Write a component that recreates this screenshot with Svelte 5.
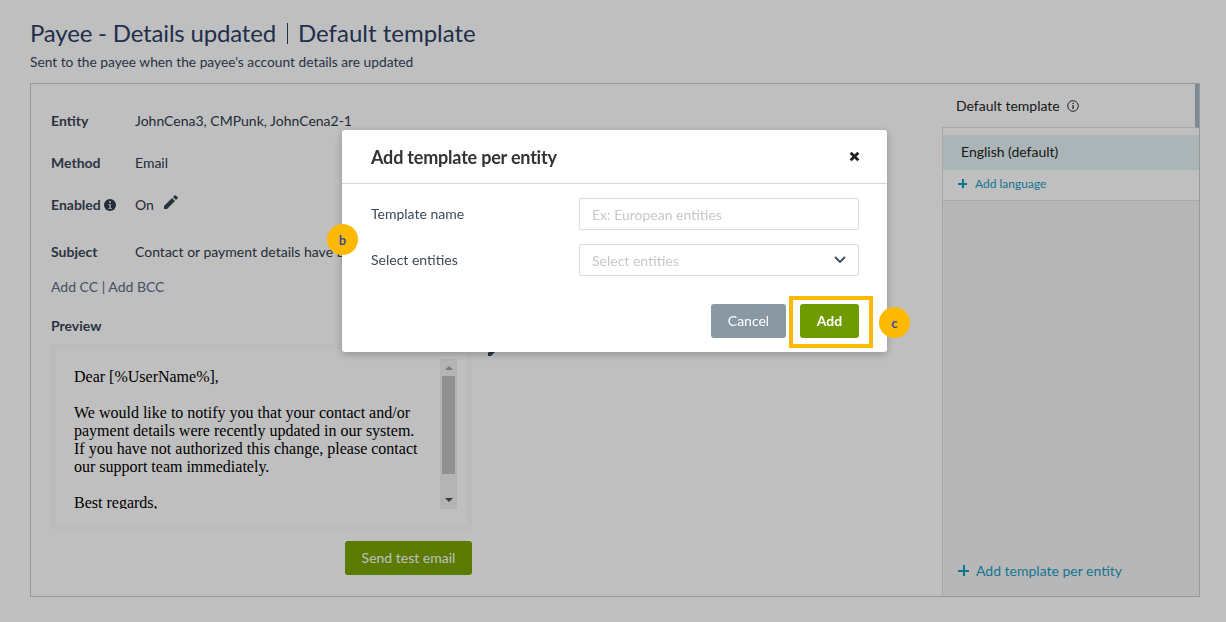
<script>
  let templateName = $state('');
</script>

<div class="page">
  <h1><span class="tight">Payee - Details updated</span><span class="sep"></span>Default template</h1>
  <p class="sub">Sent to the payee when the payee's account details are updated</p>

  <div class="card">
    <div class="left">
      <div class="row entity"><span class="label">Entity</span><span>JohnCena3, CMPunk, JohnCena2-1</span></div>
      <div class="row method"><span class="label">Method</span><span>Email</span></div>
      <div class="row enabled">
        <span class="label">Enabled
          <svg class="info" viewBox="0 0 12 12" width="12" height="12">
            <circle cx="6" cy="6" r="6" fill="#2f3b4d" />
            <rect x="5" y="2" width="2" height="2" fill="#bfbfbf" />
            <path d="M4.2 5h2.8v4h1v1H4.2V9h1V6h-1z" fill="#bfbfbf" />
          </svg>
        </span>
        <span>On</span>
        <svg class="pencil" viewBox="0 0 14 14" width="14" height="14">
          <path d="M0 14v-3l8-8 3 3-8 8zM9 2l1.500-1.500a1 1 0 0 1 1.400 0l1.600 1.600a1 1 0 0 1 0 1.400L12 5z" fill="#35474f" />
        </svg>
      </div>
      <div class="row subject"><span class="label">Subject</span><span>Contact or payment details have been updated</span></div>
      <div class="cc"><span>Add CC</span> | <span>Add BCC</span></div>
      <div class="label preview-label">Preview</div>
      <div class="preview">
        <div class="mail">
          <p>Dear [%UserName%],</p>
          <p>We would like to notify you that your contact and/or payment details were recently updated in our system. If you have not authorized this change, please contact our support team immediately.</p>
          <p>Best regards,</p>
        </div>
        <div class="scrollbar">
          <span class="arrow up"></span>
          <span class="thumb"></span>
          <span class="arrow down"></span>
        </div>
      </div>
      <div class="actions"><button class="send">Send test email</button></div>
    </div>

    <div class="gutter">
      <svg class="pencil2" viewBox="0 0 14 14" width="14" height="14">
        <path d="M0 14v-3l8-8 3 3-8 8z" fill="#35474f" />
      </svg>
    </div>

    <aside class="side">
      <div class="tab">
        <span>Default template</span>
        <svg viewBox="0 0 12 12" width="12" height="12">
          <circle cx="6" cy="6" r="5.300" fill="none" stroke="#333" stroke-width="1" />
          <rect x="5.400" y="2.800" width="1.300" height="1.300" fill="#333" />
          <rect x="5.400" y="5" width="1.300" height="4" fill="#333" />
        </svg>
      </div>
      <div class="langs">
        <div class="lang">English (default)</div>
        <div class="add-lang"><span class="plus small"></span>Add language</div>
      </div>
      <div class="rest">
        <div class="add-tpl"><span class="plus"></span>Add template per entity</div>
      </div>
    </aside>
  </div>
</div>

<div class="overlay"></div>

<div class="modal">
  <header>
    <h2>Add template per entity</h2>
    <svg class="close" viewBox="0 0 10 10" width="11" height="11">
      <path d="M1.500 1.500l7 7M8.500 1.500l-7 7" stroke="#222" stroke-width="2.600" />
    </svg>
  </header>
  <div class="form">
    <label for="tpl">Template name</label>
    <input id="tpl" placeholder="Ex: European entities" bind:value={templateName} />
    <span class="flabel">Select entities</span>
    <div class="select">
      <span>Select entities</span>
      <svg viewBox="0 0 12 8" width="12" height="8">
        <path d="M1 1l5 5 5-5" fill="none" stroke="#3c4a57" stroke-width="1.800" />
      </svg>
    </div>
  </div>
  <footer>
    <button class="cancel">Cancel</button>
    <button class="add">Add</button>
  </footer>
  <span class="highlight"></span>
  <span class="badge b">b</span>
  <span class="badge c">c</span>
</div>

<style>
  :global(body) {
    margin: 0;
    background: #fff;
    font-family: Lato, "Open Sans", sans-serif;
    color: #2f3b4d;
  }

  .page {
    height: 622px;
    box-sizing: border-box;
    padding: 18px 26px 25px 30px;
    overflow: hidden;
  }

  h1 {
    margin: 0;
    font-size: 24px;
    font-weight: 400;
    line-height: 29px;
    color: #2c3e66;
  }

  .tight {
    letter-spacing: -0.18px;
  }

  .sep {
    display: inline-block;
    width: 1px;
    height: 21px;
    background: #2c3e66;
    margin: 0 10px 0 11px;
    vertical-align: -2px;
  }

  .sub {
    margin: 7px 0 0;
    font-size: 13.750px;
    line-height: 16px;
    color: #36465c;
  }

  .card {
    display: flex;
    height: 514px;
    margin-top: 13px;
    box-sizing: border-box;
    border: 1px solid #c6cdd0;
  }

  .left {
    width: 421px;
    padding: 26px 0 0 20px;
    flex: none;
    font-size: 14px;
  }

  .row {
    display: flex;
    align-items: center;
    height: 20px;
    white-space: nowrap;
  }

  .row .label {
    width: 84px;
    flex: none;
  }

  .label {
    font-weight: 700;
    color: #3b4658;
  }

  .method, .enabled { margin-top: 22px; }
  .subject { margin-top: 27px; }

  .info { vertical-align: -1px; }

  .pencil { margin: -4px 0 0 10px; }

  .cc {
    margin-top: 16px;
    line-height: 20px;
    color: #5d6a88;
  }

  .preview-label {
    margin-top: 19px;
    line-height: 20px;
  }

  .preview {
    display: flex;
    margin-top: 8px;
    height: 185px;
    box-sizing: border-box;
    border: 5px solid #fafafa;
    background: #fff;
    padding: 10px 10px 15px 18px;
  }

  .mail {
    flex: 1;
    overflow: hidden;
    font-family: "Liberation Serif", serif;
    font-size: 16px;
    line-height: 18px;
    color: #000;
    padding-top: 9px;
  }

  .mail p {
    margin: 0 0 18px;
    width: 350px;
  }

  .scrollbar {
    width: 17px;
    flex: none;
    background: #f1f1f1;
    display: flex;
    flex-direction: column;
    align-items: center;
  }

  .thumb {
    width: 13px;
    height: 98px;
    background: #c1c1c1;
  }

  .arrow {
    width: 0;
    height: 0;
    border-left: 4px solid transparent;
    border-right: 4px solid transparent;
  }

  .arrow.up {
    border-bottom: 4px solid #a3a3a3;
    margin: 7px 0 6px;
  }

  .arrow.down {
    border-top: 4px solid #505050;
    margin-top: 24px;
  }

  .actions {
    display: flex;
    justify-content: flex-end;
    margin-top: 12px;
  }

  button {
    font-family: inherit;
    border: none;
    border-radius: 3px;
    color: #fff;
    font-size: 14px;
    padding: 0 0 2px;
  }

  .send {
    width: 127px;
    height: 34px;
    background: #78a300;
  }

  .gutter {
    flex: 1;
    position: relative;
  }

  .pencil2 {
    position: absolute;
    left: 16px;
    top: 258px;
  }

  .side {
    width: 257px;
    flex: none;
    display: flex;
    flex-direction: column;
    font-size: 14px;
  }

  .tab {
    height: 44px;
    box-sizing: border-box;
    display: flex;
    align-items: center;
    gap: 7px;
    padding-left: 14px;
    color: #222;
    border-right: 4px solid #a9b7c6;
    border-bottom: 1px solid #dfe3e6;
  }

  .langs {
    border-left: 1px solid #dfe3e6;
    border-bottom: 1px solid #dfe3e6;
    padding-top: 7px;
    height: 73px;
    box-sizing: border-box;
  }

  .lang {
    height: 35px;
    line-height: 33px;
    padding-left: 18px;
    background: #e4f1f5;
    color: #222;
  }

  .add-lang {
    display: flex;
    align-items: center;
    height: 27px;
    padding-left: 15px;
    gap: 8px;
    font-size: 12px;
    color: #1b9cc4;
  }

  .rest {
    flex: 1;
    background: #f5f5f5;
    border-left: 1px solid #dfe3e6;
    display: flex;
    align-items: flex-end;
  }

  .add-tpl {
    display: flex;
    align-items: center;
    gap: 7px;
    padding: 0 0 17px 15px;
    color: #1b9cc4;
  }

  .plus {
    display: inline-block;
    width: 11px;
    height: 11px;
    background:
      linear-gradient(#0f9bc4, #0f9bc4) center / 100% 2px no-repeat,
      linear-gradient(#0f9bc4, #0f9bc4) center / 2px 100% no-repeat;
  }

  .plus.small {
    width: 9px;
    height: 9px;
  }

  .overlay {
    position: fixed;
    inset: 0;
    background: rgba(0, 0, 0, 0.25);
  }

  .modal {
    position: fixed;
    left: 342px;
    top: 130px;
    width: 545px;
    height: 222px;
    background: #fff;
    border-radius: 3px;
    box-shadow: 0 2px 8px rgba(0, 0, 0, 0.25);
    color: #3c4a57;
    font-size: 14px;
  }

  header {
    display: flex;
    align-items: center;
    justify-content: space-between;
    height: 53px;
    padding: 0 27px 0 29px;
    border-bottom: 1px solid #d3d5df;
  }

  h2 {
    margin: 0;
    font-size: 18px;
    font-weight: 700;
    color: #333;
    letter-spacing: -0.2px;
  }

  .form {
    display: grid;
    grid-template-columns: 208px 280px;
    grid-auto-rows: 32px;
    row-gap: 14px;
    align-items: center;
    padding: 14px 28px 0 29px;
  }

  label {
    margin-top: -2px;
  }

  .flabel {
    margin-top: -2px;
  }

  input, .select {
    box-sizing: border-box;
    width: 100%;
    height: 32px;
    border: 1px solid #d9dcdf;
    border-radius: 2px;
    padding: 0 12px;
    font-family: inherit;
    font-size: 14px;
    outline: none;
  }

  input::placeholder, .select span {
    color: #c4c8cc;
  }

  .select {
    display: flex;
    align-items: center;
    justify-content: space-between;
  }

  footer {
    display: flex;
    justify-content: flex-end;
    gap: 14px;
    padding: 28px 28px 0 0;
  }

  footer button {
    height: 34px;
  }

  .cancel {
    width: 75px;
    background: #8a98a3;
  }

  .add {
    width: 59px;
    background: #6f9a00;
    font-weight: 700;
  }

  .highlight {
    position: absolute;
    left: 447px;
    top: 166px;
    width: 76px;
    height: 44px;
    border: 4px solid #fdb900;
  }

  .badge {
    position: absolute;
    width: 31px;
    height: 31px;
    border-radius: 50%;
    background: #fdb900;
    color: #3d4a9c;
    font-size: 13px;
    font-weight: 700;
    display: flex;
    align-items: center;
    justify-content: center;
  }

  .b { left: -15px; top: 94px; }
  .c { left: 537px; top: 177px; }
</style>
